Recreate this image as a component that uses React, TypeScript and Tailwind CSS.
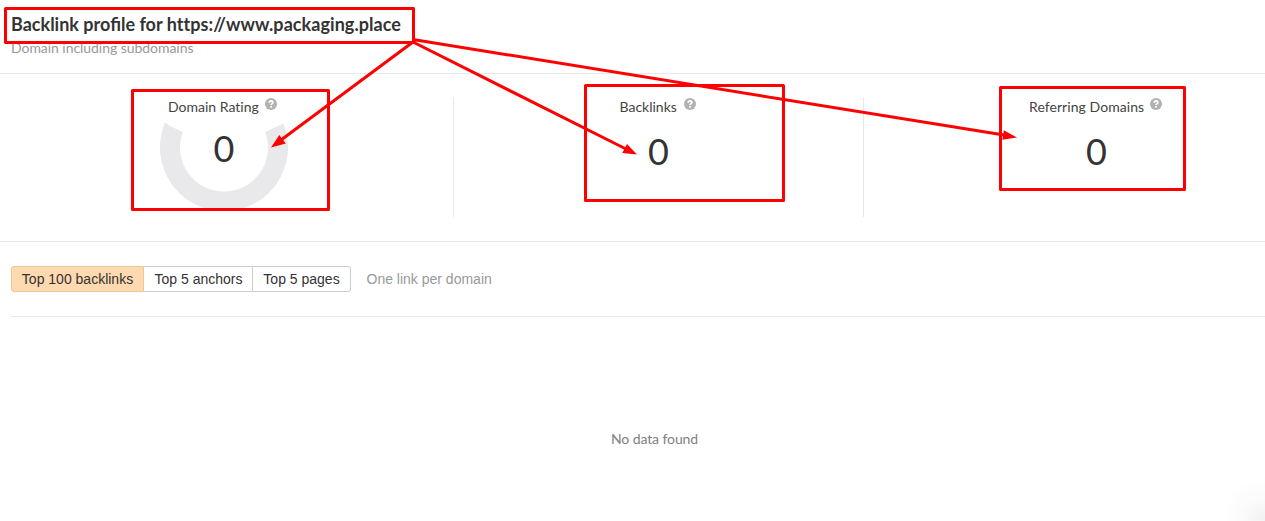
import React from "react";

function HelpIcon() {
  return (
    <svg width="12" height="12" viewBox="0 0 12 12" className="mt-px shrink-0">
      <circle cx="6" cy="6" r="6" fill="#b2b2b2" />
      <path d="M4.2 4.7C4.2 3.5 5 2.9 6 2.9s1.85.6 1.85 1.6c0 1.2-1.75 1.2-1.75 2.6" fill="none" stroke="#fff" strokeWidth="1.7" />
      <rect x="5.2" y="8" width="1.7" height="1.6" fill="#fff" />
    </svg>
  );
}

function Gauge() {
  return (
    <svg width="128" height="90" viewBox="0 0 128 90" className="absolute left-[160px] top-[47px]">
      <path d="M4.6 1.5A64 64 0 1 0 123.4 1.5L105.2 10A44 44 0 1 1 22.8 10Z" fill="#e9e9eb" />
      <path d="M4.6 1.2L8 2.8" stroke="#fbd3a4" strokeWidth="0.7" />
    </svg>
  );
}

type MetricProps = {
  label: string;
  labelClass: string;
  valueClass: string;
  children?: React.ReactNode;
};

function Metric({ label, labelClass, valueClass, children }: MetricProps) {
  return (
    <div className="relative h-full">
      {children}
      <div className={`relative flex h-5 text-[14px] leading-5 whitespace-nowrap text-[#444] [font-variant-ligatures:none] ${labelClass}`}>
        <span>{label}</span>
        <HelpIcon />
      </div>
      <div className={`relative text-[36px] leading-[44px] ${valueClass}`}>0</div>
    </div>
  );
}

function Annotations() {
  return (
    <svg width="1265" height="521" viewBox="0 0 1265 521" className="pointer-events-none absolute left-0 top-0">
      <g fill="none" stroke="#ff0000" strokeWidth="3" strokeLinejoin="round">
        <rect x="5.5" y="8.5" width="408" height="34" />
        <rect x="132.5" y="90.5" width="196" height="119" />
        <rect x="585.5" y="85.5" width="198" height="115" />
        <rect x="1000.5" y="87.5" width="184" height="102" />
        <path d="M413 42L281 140M413 42L626 149M413 39.5L1004 135" />
      </g>
      <g fill="#ff0000">
        <path d="M271 147.5L279.3 135L285.8 143.6Z" />
        <path d="M637 154.5L622.3 153L627 144Z" />
        <path d="M1017 137.5L1002.3 139.8L1003.8 130.2Z" />
      </g>
    </svg>
  );
}

export default function App() {
  return (
    <main className="relative flex h-[521px] w-[1265px] flex-col overflow-hidden bg-white font-['Lato',sans-serif] text-[#333]">
      <header className="h-[74px] shrink-0 border-b border-[#e9e9e9] pl-[11px] pt-[12px]">
        <h1 className="w-max text-[18px] font-bold leading-6">
          Backlink profile for <span className="tracking-[0.06px] [font-variant-ligatures:none]">https://www.packaging.place</span>
        </h1>
        <p className="w-max text-[14px] leading-6 tracking-[-0.05px] text-[#999]">Domain including subdomains</p>
      </header>

      <section className="grid h-[168px] shrink-0 grid-cols-[454px_410px_401px] border-b border-[#e9e9e9] pb-6 pt-[23px]">
        <div className="border-r border-[#e9e9e9]">
          <Metric label="Domain Rating" labelClass="gap-[6px] pl-[168px]" valueClass="pl-[213.5px] pt-[9px]">
            <div className="absolute left-0 top-[-22px]"><Gauge /></div>
          </Metric>
        </div>
        <div className="border-r border-[#e9e9e9]">
          <Metric label="Backlinks" labelClass="gap-[7px] pl-[165.5px]" valueClass="pl-[194px] pt-[12px]" />
        </div>
        <Metric label="Referring Domains" labelClass="gap-[6px] pl-[165px] tracking-[0.06px]" valueClass="pl-[222px] pt-[12px]" />
      </section>

      <section className="ml-[11px] flex h-[75px] shrink-0 items-start border-b border-[#e9e9e9] pt-6 font-['Liberation_Sans',Arial,sans-serif] text-[14px] leading-6">
        <button className="h-[26px] w-[133px] rounded-l-[3px] border border-[#edc69c] bg-[#ffd9b0]">Top 100 backlinks</button>
        <button className="h-[26px] w-[108px] border-y border-[#ccc] pl-px">Top 5 anchors</button>
        <button className="h-[26px] w-[99px] rounded-r-[3px] border border-[#ccc]">Top 5 pages</button>
        <span className="ml-[15.5px] pt-px text-[#999]">One link per domain</span>
      </section>

      <p className="ml-[611px] mt-[112px] w-max text-[14px] leading-5 tracking-[-0.1px] text-[#808080]">No data found</p>

      <div className="absolute bottom-0 right-0 h-12 w-12 bg-[radial-gradient(circle_at_bottom_right,#f2f2f2_0%,#fbfbfb_35%,#ffffff_65%)]" />
      <Annotations />
    </main>
  );
}
